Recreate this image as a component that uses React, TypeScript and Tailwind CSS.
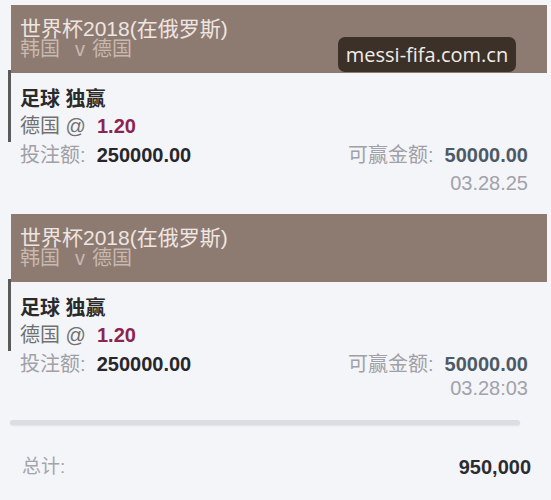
const font = { fontFamily: '"Liberation Sans", "Noto Sans CJK SC", sans-serif' };

type Bet = { time: string; timeClass: string };

const bets: Bet[] = [
    { time: "03.28.25", timeClass: "leading-[28px]" },
    { time: "03.28:03", timeClass: "leading-[20px]" },
];

function BetCard({ bet }: { bet: Bet }) {
    return (
        <div className="pl-[8px] pr-[4px]">
            <div className="ml-[3px] h-[68px] bg-[#8d7b71] px-[9px] pt-[13px] leading-[21px]">
                <p className="text-[21px] text-[#efe5e1]">世界杯2018(在俄罗斯)</p>
                <p className="text-[20px] text-[#c9b8b0]">
                    韩国<span className="ml-[15px] mr-[7px]">v</span>德国
                </p>
            </div>
            <div className="-mt-[3px] border-l-[3px] border-[#5a5a5a] pl-[9px] pt-[16px] pb-[2px] leading-[27px]">
                <p className="text-[20px] font-bold text-[#2a2a2a]">足球 独赢</p>
                <p className="text-[20px] text-[#707070]">
                    德国 @ &nbsp;<span className="font-bold text-[#8c2452]">1.20</span>
                </p>
            </div>
            <div className="flex items-center justify-between pl-[12px] pr-[19px] leading-[27px]">
                <p className="text-[20px] text-[#a0a0a6]">
                    投注额: &nbsp;<span className="font-bold text-[#26262c]">250000.00</span>
                </p>
                <p className="text-[20px] text-[#a0a0a6]">
                    可赢金额: &nbsp;<span className="font-bold text-[#4d5a66]">50000.00</span>
                </p>
            </div>
            <p className={`pr-[19px] text-right text-[20px] text-[#a2a2aa] ${bet.timeClass}`}>{bet.time}</p>
        </div>
    );
}

export default function App() {
    return (
        <div className="relative h-[500px] w-[551px] overflow-hidden bg-[#f4f5f9]" style={font}>
            <div className="flex flex-col gap-[17px] pt-[5px]">
                {bets.map((b) => (
                    <BetCard key={b.time} bet={b} />
                ))}
            </div>
            <div className="ml-[10px] mr-[31px] mt-[22px] h-[5px] rounded-full bg-[#dcdde3] shadow-[0_1px_2px_rgba(0,0,0,0.08)]" />
            <div className="flex items-center justify-between pl-[22px] pr-[20px] pt-[27px]">
                <p className="text-[19px] text-[#a4a4aa]">总计:</p>
                <p className="text-[20px] font-bold text-[#2c2c30]">950,000</p>
            </div>
            <div className="absolute left-[338px] top-[37px] flex h-[35px] w-[178px] items-center justify-center rounded-[7px] bg-[#3b3129] text-[20px] text-[#f2ece6]" style={{ fontFamily: '"Open Sans", "Noto Sans", sans-serif' }}>
                messi-fifa.com.cn
            </div>
        </div>
    );
}
